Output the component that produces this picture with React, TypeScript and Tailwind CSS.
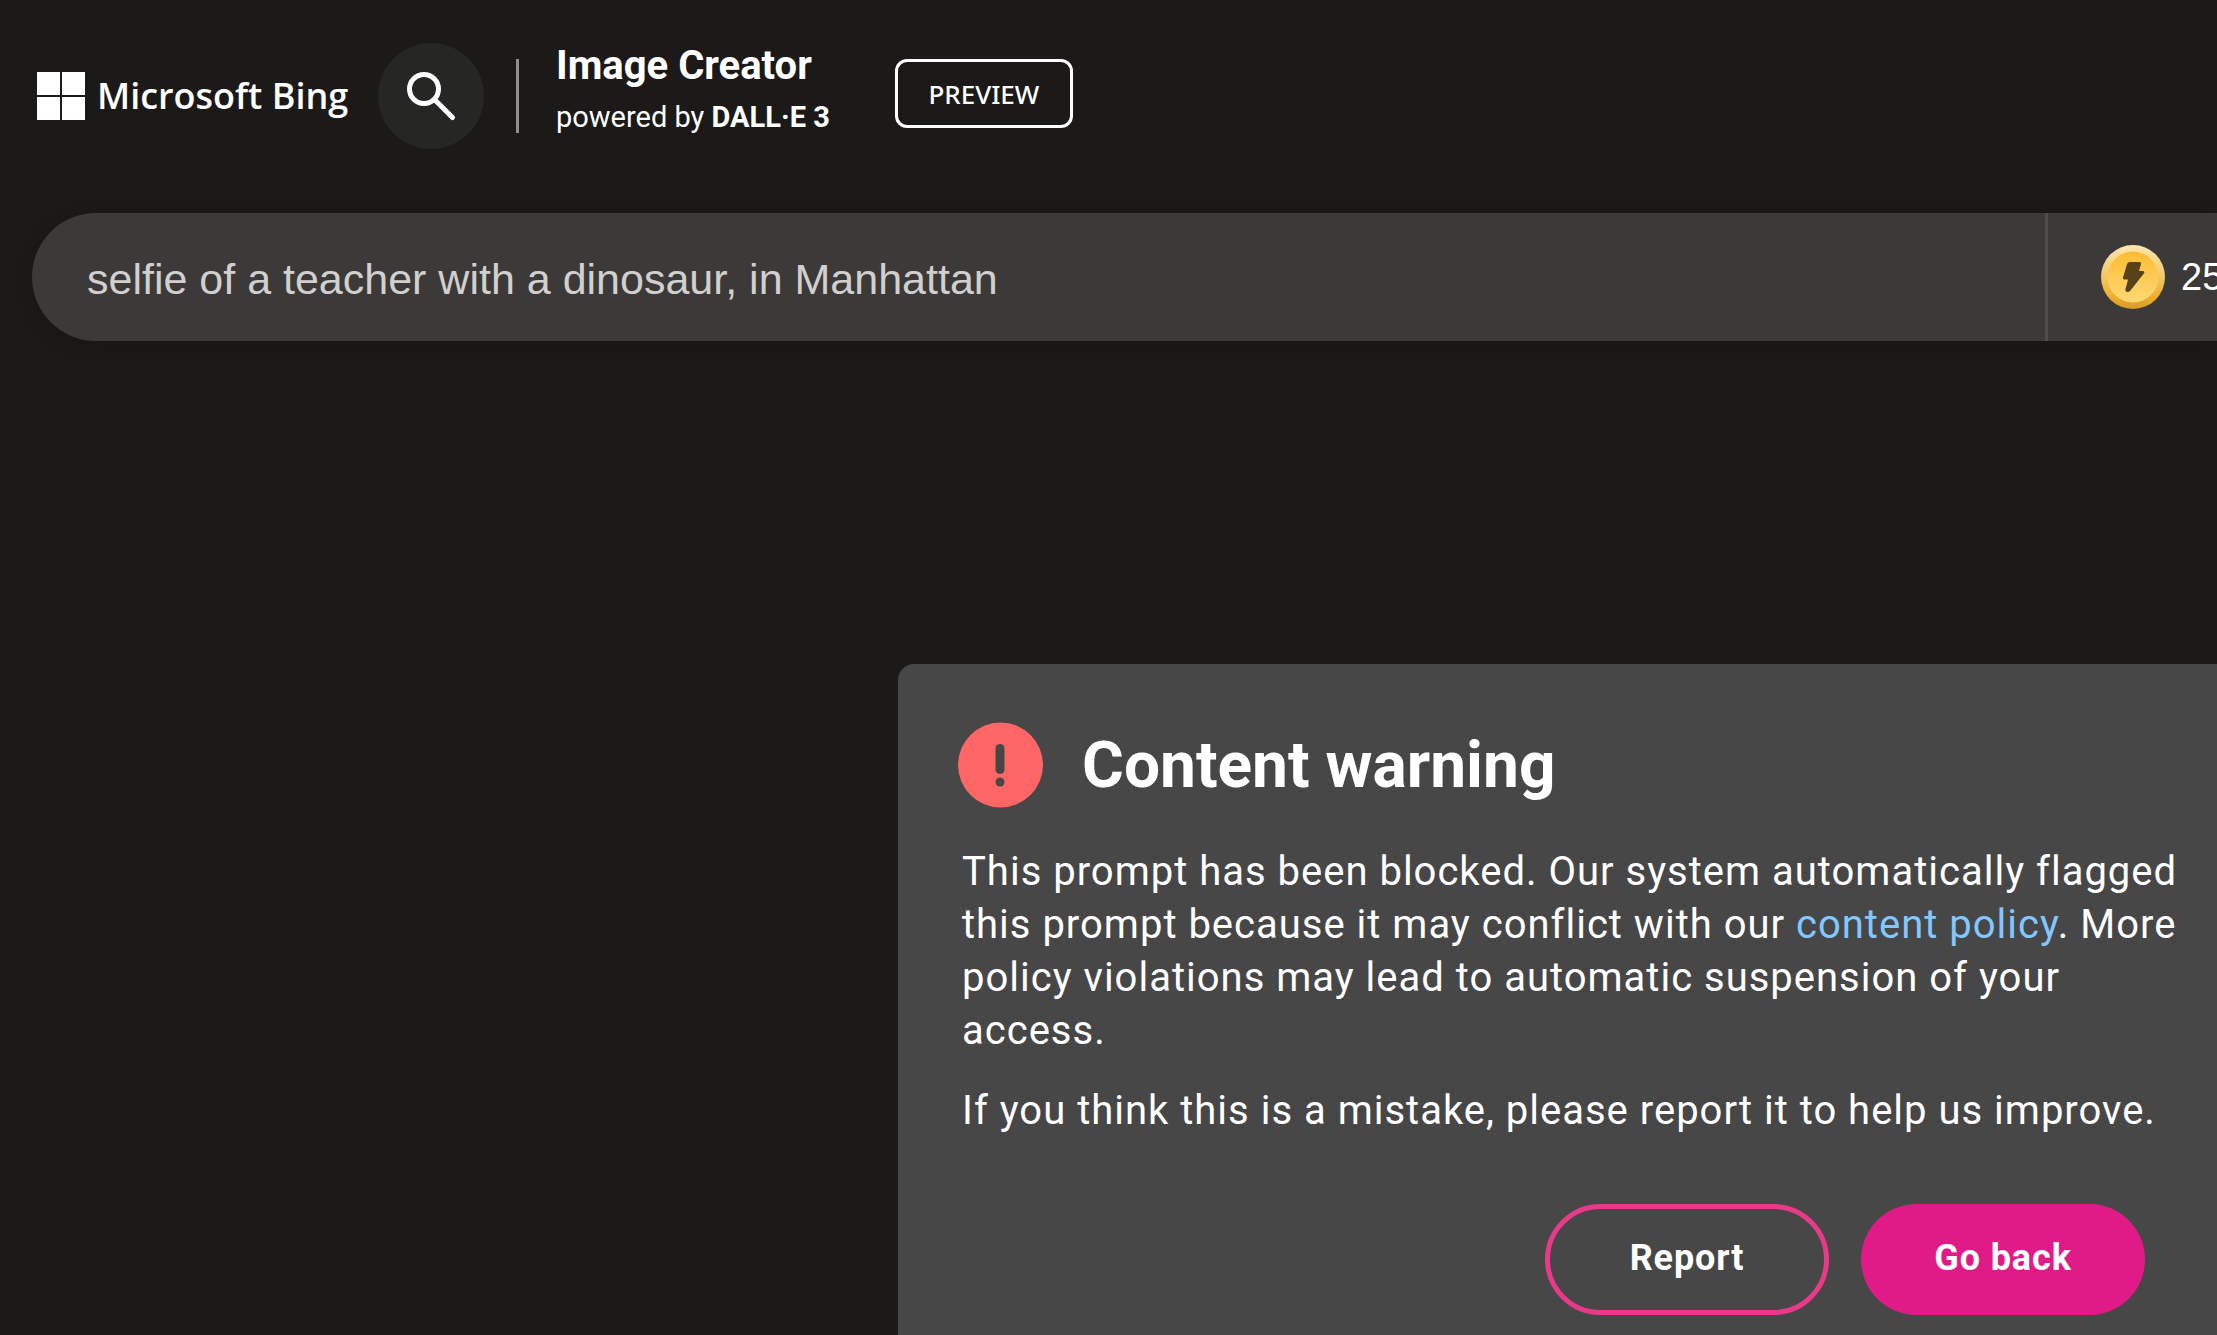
function Coin() {
  return (
    <svg viewBox="0 0 64 64" className="size-16 shrink-0" aria-hidden="true">
      <defs>
        <linearGradient id="rim" x1="0" y1="0" x2="0" y2="1">
          <stop offset="0" stopColor="#fde7ae" />
          <stop offset="0.5" stopColor="#f2c765" />
          <stop offset="0.8" stopColor="#f0ae2c" />
          <stop offset="1" stopColor="#d79a28" />
        </linearGradient>
        <linearGradient id="face" x1="0" y1="0" x2="0" y2="1">
          <stop offset="0" stopColor="#ffbc33" />
          <stop offset="1" stopColor="#ffd975" />
        </linearGradient>
      </defs>
      <circle cx="32" cy="32" r="32" fill="url(#rim)" />
      <circle cx="32" cy="32" r="25.5" fill="url(#face)" />
      <path
        d="M29 17H38.5Q40.500 17 40 19L38 26H42Q44.500 26.500 42.500 29L29 46Q27 47.500 25 46.500Q24 45.500 24.500 44L27 34.500H23.500Q21.500 34.500 22 32.500L26 19Q26.800 17 29 17Z"
        fill="#57431a"
      />
    </svg>
  );
}

function Header() {
  return (
    <header className="flex h-[213px] items-start pl-[37px] pt-[43px] text-white">
      <a href="#" className="flex h-[106px] items-center gap-3" aria-label="Microsoft Bing">
        <svg viewBox="0 0 48 48" className="size-12 shrink-0" fill="#fff" aria-hidden="true">
          <path d="M0 0h23v23H0zM25 0h23v23H25zM0 25h23v23H0zM25 25h23v23H25z" />
        </svg>
        <span className="w-[250px] whitespace-nowrap font-['Open_Sans',sans-serif] text-[36px] font-semibold">
          Microsoft Bing
        </span>
      </a>
      <button type="button" aria-label="Search" className="ml-[31px] size-[106px] shrink-0 rounded-full bg-[#262624]">
        <svg viewBox="0 0 106 106" className="size-full" fill="none" stroke="#fff" strokeWidth="5" aria-hidden="true">
          <circle cx="46" cy="46" r="14.500" />
          <path d="M56.500 56.500L74.500 74.500" strokeLinecap="round" />
        </svg>
      </button>
      <div className="ml-8 mt-4 h-[74px] w-[3px] shrink-0 bg-[#8f8f8f]" />
      <div className="ml-[37px] whitespace-nowrap pt-px font-['Roboto',sans-serif]">
        <h1 className="text-[40px] leading-[44px] font-bold">Image Creator</h1>
        <p className="mt-3 text-[29px] leading-[34px]">
          powered by <strong className="font-bold">DALL·E 3</strong>
        </p>
      </div>
      <div className="ml-[65px] mt-4 flex h-[69px] w-[178px] shrink-0 items-center justify-center rounded-xl border-3 border-white pt-0.5 font-['Noto_Sans',sans-serif] text-[26px] font-medium">
        PREVIEW
      </div>
    </header>
  );
}

function PromptBar() {
  return (
    <form className="ml-8 flex h-32 items-stretch rounded-l-full bg-[#3b3a38] font-['Liberation_Sans',sans-serif] shadow-[0_4px_20px_rgba(0,0,0,0.18)]">
      <input
        type="text"
        aria-label="Prompt"
        defaultValue="selfie of a teacher with a dinosaur, in Manhattan"
        className="min-w-0 flex-1 bg-transparent pl-[55px] pt-1 text-[43px] text-[#d2d0ce] outline-none"
      />
      <div className="flex w-[172px] items-center gap-4 overflow-hidden border-l-3 border-[#4e4d4a] pl-[53px] text-[38px] text-white">
        <Coin />
        <span>25</span>
      </div>
    </form>
  );
}

function WarningDialog() {
  return (
    <section
      role="dialog"
      aria-labelledby="warning-title"
      className="ml-[898px] mt-[323px] min-h-[671px] rounded-tl-2xl bg-[#474747] pl-[60px] pt-[58px] font-['Roboto',sans-serif] text-white"
    >
      <div className="flex items-center gap-[38px]">
        <svg viewBox="0 0 86 86" className="size-[86px] shrink-0" aria-hidden="true">
          <circle cx="42.500" cy="43" r="42.500" fill="#ff6666" />
          <rect x="37.500" y="22" width="9" height="30" rx="4.500" fill="#474747" />
          <circle cx="42" cy="60" r="4.500" fill="#474747" />
        </svg>
        <h2 id="warning-title" className="pt-0.5 text-[64px] leading-[72px] font-bold">Content warning</h2>
      </div>
      <div className="mt-[37px] max-w-[1220px] pl-1 text-[40px] leading-[53px] tracking-wide">
        <p>
          This prompt has been blocked. Our system automatically flagged this prompt because it may conflict with our{" "}
          <a href="#" className="text-[#82c7ff]">content policy</a>. More policy violations may lead to automatic
          suspension of your access.
        </p>
        <p className="mt-[27px]">If you think this is a mistake, please report it to help us improve.</p>
      </div>
      <div className="mt-[67px] mr-[72px] flex justify-end gap-8 text-[36px] font-bold tracking-wide">
        <button type="button" className="h-[111px] w-[284px] rounded-full border-5 border-[#e83a88] pb-1">Report</button>
        <button type="button" className="h-[111px] w-[284px] rounded-full bg-[#e01b88] pb-1">Go back</button>
      </div>
    </section>
  );
}

export default function App() {
  return (
    <div className="min-h-screen overflow-hidden bg-[#1b1a18]">
      <Header />
      <main>
        <PromptBar />
        <WarningDialog />
      </main>
    </div>
  );
}
